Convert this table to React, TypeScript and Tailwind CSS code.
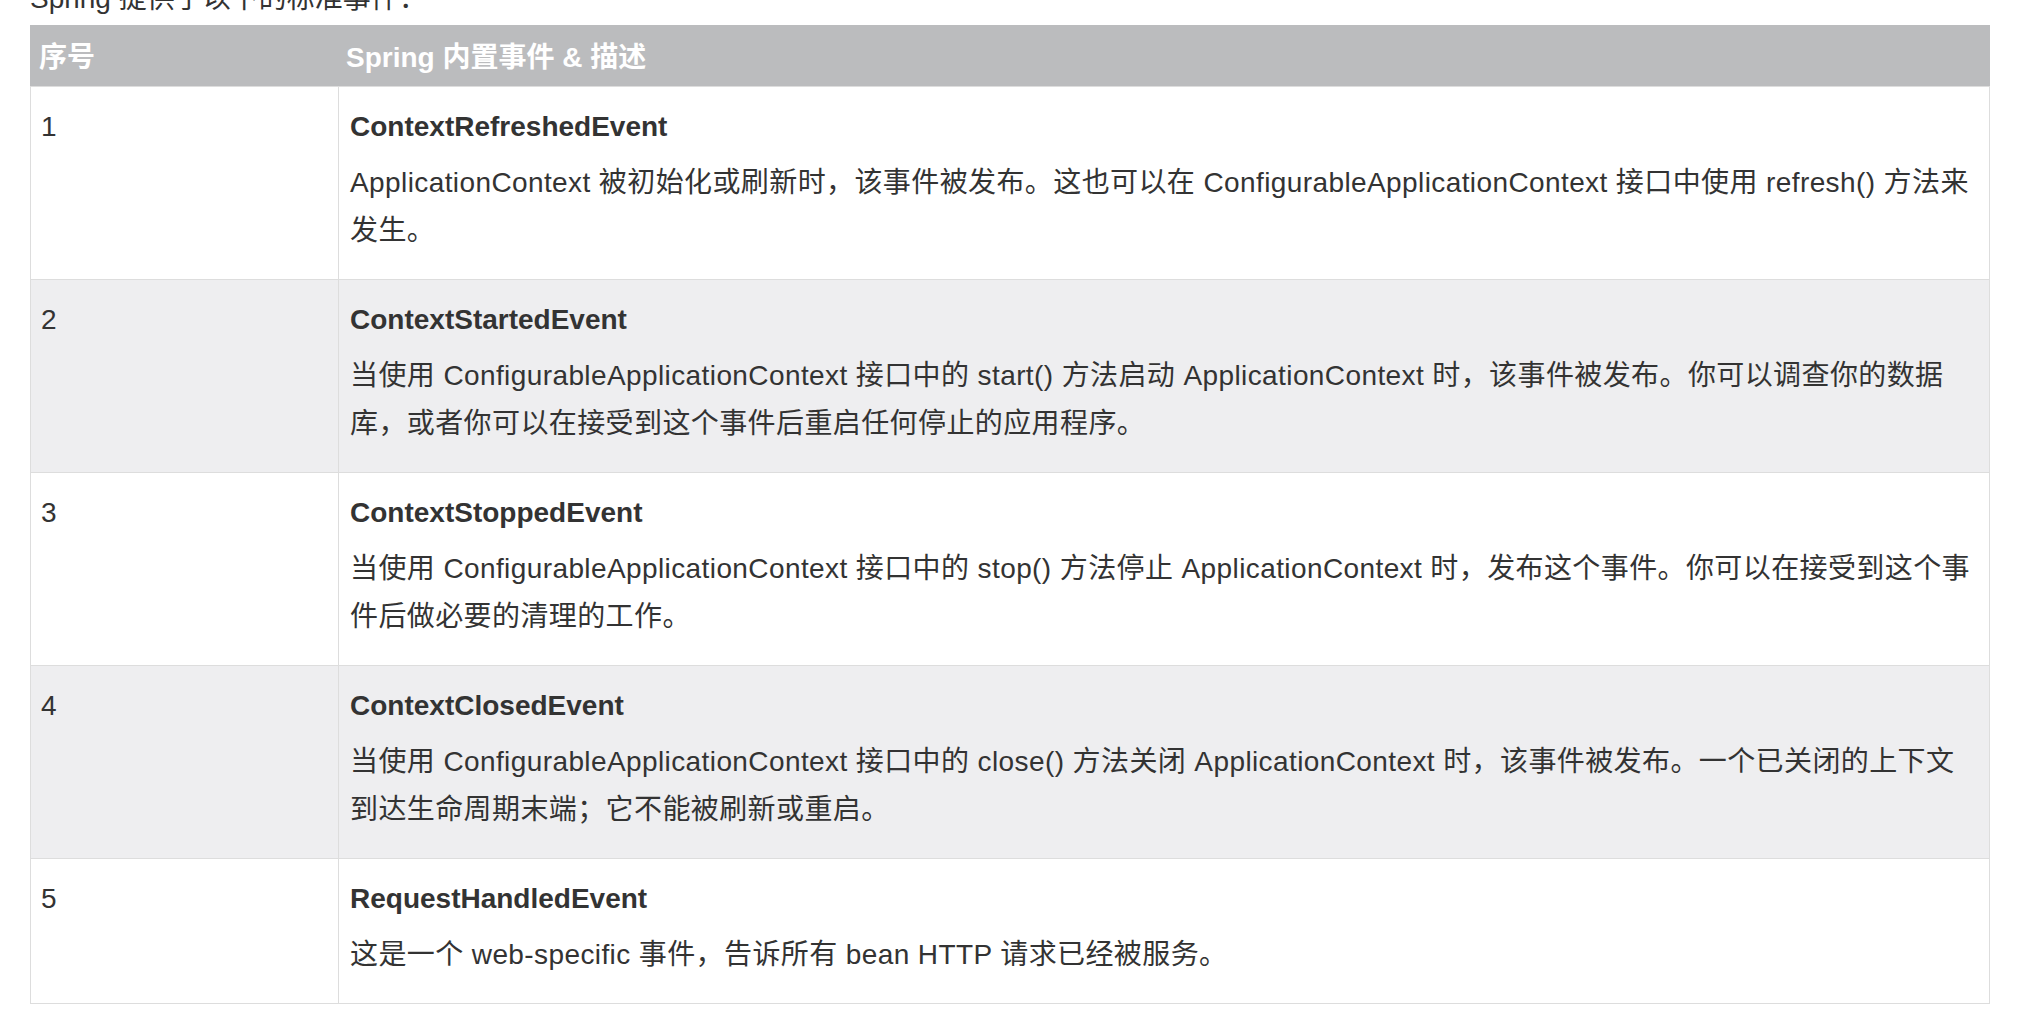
type EventRow = {
    id: number;
    name: string;
    lines: string[];
};

const events: EventRow[] = [
    {
        id: 1,
        name: 'ContextRefreshedEvent',
        lines: [
            'ApplicationContext 被初始化或刷新时，该事件被发布。这也可以在 ConfigurableApplicationContext 接口中使用 refresh() 方法来',
            '发生。',
        ],
    },
    {
        id: 2,
        name: 'ContextStartedEvent',
        lines: [
            '当使用 ConfigurableApplicationContext 接口中的 start() 方法启动 ApplicationContext 时，该事件被发布。你可以调查你的数据',
            '库，或者你可以在接受到这个事件后重启任何停止的应用程序。',
        ],
    },
    {
        id: 3,
        name: 'ContextStoppedEvent',
        lines: [
            '当使用 ConfigurableApplicationContext 接口中的 stop() 方法停止 ApplicationContext 时，发布这个事件。你可以在接受到这个事',
            '件后做必要的清理的工作。',
        ],
    },
    {
        id: 4,
        name: 'ContextClosedEvent',
        lines: [
            '当使用 ConfigurableApplicationContext 接口中的 close() 方法关闭 ApplicationContext 时，该事件被发布。一个已关闭的上下文',
            '到达生命周期末端；它不能被刷新或重启。',
        ],
    },
    {
        id: 5,
        name: 'RequestHandledEvent',
        lines: ['这是一个 web-specific 事件，告诉所有 bean HTTP 请求已经被服务。'],
    },
];

export default function App() {
    return (
        <div className="min-h-screen bg-white pl-[30px] text-[#333333] font-['Liberation_Sans','Noto_Sans_CJK_SC',sans-serif]">
            {/* intro line, mostly scrolled off the top */}
            <p className="-mt-[25px] mb-[2px] text-[28px] leading-[48px]">Spring 提供了以下的标准事件：</p>

            <table className="w-[1960px] border-collapse text-[28px] leading-[48px]">
                <thead>
                    <tr className="bg-[#bbbcbe] text-white">
                        <th className="w-[308px] border border-[#bbbcbe] border-b-[#dddddd] pl-[8px] pt-[8px] pb-[4px] text-left font-bold">
                            序号
                        </th>
                        <th className="border border-[#bbbcbe] border-b-[#dddddd] pl-[7px] pt-[8px] pb-[4px] text-left font-bold">
                            Spring 内置事件 &amp; 描述
                        </th>
                    </tr>
                </thead>
                <tbody>
                    {events.map((ev, i) => (
                        <tr key={ev.id} className={i % 2 === 1 ? 'bg-[#eeeef0]' : 'bg-white'}>
                            <td className="border border-[#dddddd] align-top pl-[10px] pt-[16px] pb-[24px]">{ev.id}</td>
                            <td className="border border-[#dddddd] align-top pl-[11px] pr-[10px] pt-[16px] pb-[24px]">
                                <p className="font-bold">{ev.name}</p>
                                <p className="mt-[8px] tracking-[0.4px]">
                                    {ev.lines.map((line) => (
                                        <span key={line} className="block whitespace-nowrap">
                                            {line}
                                        </span>
                                    ))}
                                </p>
                            </td>
                        </tr>
                    ))}
                </tbody>
            </table>
        </div>
    );
}
